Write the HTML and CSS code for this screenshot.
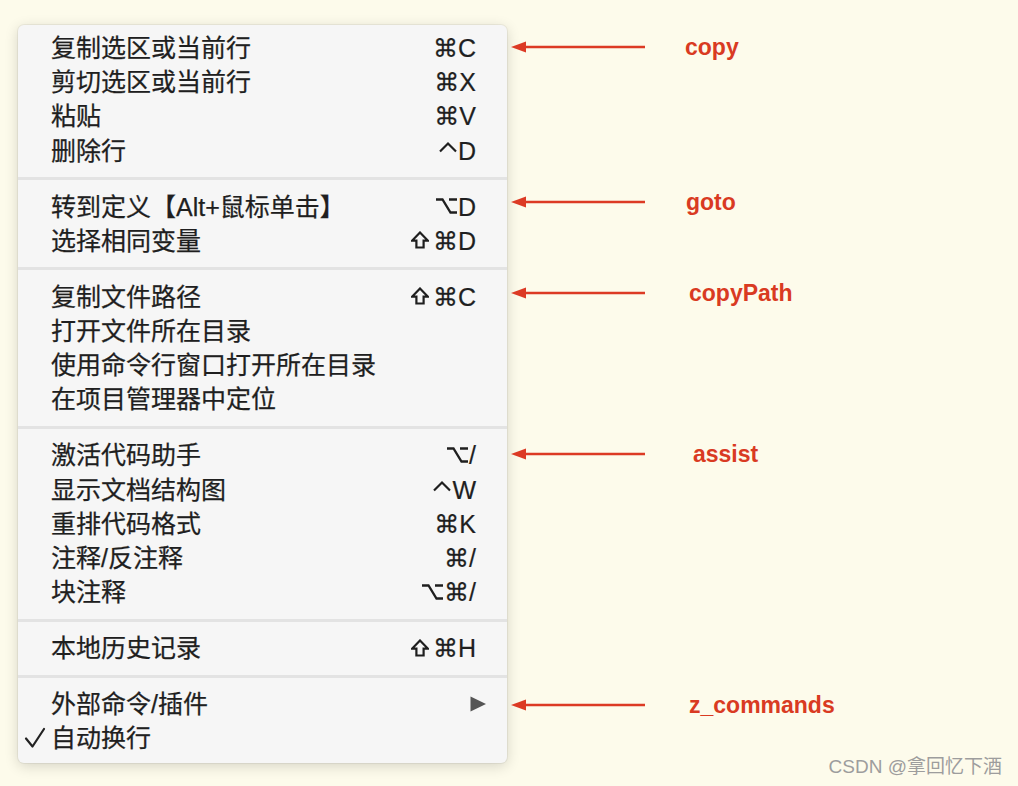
FILE: index.html
```html
<!DOCTYPE html>
<html lang="zh-CN">
<head>
<meta charset="utf-8">
<title>Menu</title>
<link rel="stylesheet" href="styles.css">
</head>
<body>
<div class="page">
  <div class="menu">
    <div class="item"><span class="check"></span><span class="label">复制选区或当前行</span><span class="key">⌘C</span></div>
    <div class="item"><span class="check"></span><span class="label">剪切选区或当前行</span><span class="key">⌘X</span></div>
    <div class="item"><span class="check"></span><span class="label">粘贴</span><span class="key">⌘V</span></div>
    <div class="item"><span class="check"></span><span class="label">删除行</span><span class="key"><svg class="k-ctrl" width="20" height="18" viewBox="0 0 20 18"><polyline points="2,10.5 10,2.5 18,10.5" fill="none" stroke="#1f1f1f" stroke-width="2.2" stroke-linejoin="miter"/></svg>D</span></div>
    <div class="sep"></div>
    <div class="item"><span class="check"></span><span class="label">转到定义【Alt+鼠标单击】</span><span class="key"><svg class="k-opt" width="23" height="18" viewBox="0 0 23 18"><path d="M1 2.5 H7.5 L15.5 15.5 H22 M14 2.5 H22" fill="none" stroke="#1f1f1f" stroke-width="2.3"/></svg>D</span></div>
    <div class="item"><span class="check"></span><span class="label">选择相同变量</span><span class="key"><svg class="k-shift" width="18" height="18" viewBox="0 0 18 18"><path d="M9 1.5 L16.8 9.6 L12.6 9.6 L12.6 16.5 L5.4 16.5 L5.4 9.6 L1.2 9.6 Z" fill="none" stroke="#1f1f1f" stroke-width="2.2" stroke-linejoin="miter"/></svg>⌘D</span></div>
    <div class="sep"></div>
    <div class="item"><span class="check"></span><span class="label">复制文件路径</span><span class="key"><svg class="k-shift" width="18" height="18" viewBox="0 0 18 18"><path d="M9 1.5 L16.8 9.6 L12.6 9.6 L12.6 16.5 L5.4 16.5 L5.4 9.6 L1.2 9.6 Z" fill="none" stroke="#1f1f1f" stroke-width="2.2" stroke-linejoin="miter"/></svg>⌘C</span></div>
    <div class="item"><span class="check"></span><span class="label">打开文件所在目录</span><span class="key"></span></div>
    <div class="item"><span class="check"></span><span class="label">使用命令行窗口打开所在目录</span><span class="key"></span></div>
    <div class="item"><span class="check"></span><span class="label">在项目管理器中定位</span><span class="key"></span></div>
    <div class="sep"></div>
    <div class="item"><span class="check"></span><span class="label">激活代码助手</span><span class="key"><svg class="k-opt" width="23" height="18" viewBox="0 0 23 18"><path d="M1 2.5 H7.5 L15.5 15.5 H22 M14 2.5 H22" fill="none" stroke="#1f1f1f" stroke-width="2.3"/></svg>/</span></div>
    <div class="item"><span class="check"></span><span class="label">显示文档结构图</span><span class="key"><svg class="k-ctrl" width="20" height="18" viewBox="0 0 20 18"><polyline points="2,10.5 10,2.5 18,10.5" fill="none" stroke="#1f1f1f" stroke-width="2.2" stroke-linejoin="miter"/></svg>W</span></div>
    <div class="item"><span class="check"></span><span class="label">重排代码格式</span><span class="key">⌘K</span></div>
    <div class="item"><span class="check"></span><span class="label">注释/反注释</span><span class="key">⌘/</span></div>
    <div class="item"><span class="check"></span><span class="label">块注释</span><span class="key"><svg class="k-opt" width="23" height="18" viewBox="0 0 23 18"><path d="M1 2.5 H7.5 L15.5 15.5 H22 M14 2.5 H22" fill="none" stroke="#1f1f1f" stroke-width="2.3"/></svg>⌘/</span></div>
    <div class="sep"></div>
    <div class="item"><span class="check"></span><span class="label">本地历史记录</span><span class="key"><svg class="k-shift" width="18" height="18" viewBox="0 0 18 18"><path d="M9 1.5 L16.8 9.6 L12.6 9.6 L12.6 16.5 L5.4 16.5 L5.4 9.6 L1.2 9.6 Z" fill="none" stroke="#1f1f1f" stroke-width="2.2" stroke-linejoin="miter"/></svg>⌘H</span></div>
    <div class="sep"></div>
    <div class="item"><span class="check"></span><span class="label">外部命令/插件</span><span class="key submenu"><svg width="16" height="16" viewBox="0 0 16 16"><polygon points="0.5,0.5 16,8 0.5,15.5" fill="#555"/></svg></span></div>
    <div class="item"><span class="check"><svg width="22" height="22" viewBox="0 0 22 22"><path d="M2 11.5 L8.5 19.5 L20 2" fill="none" stroke="#222" stroke-width="2.2" stroke-linecap="round" stroke-linejoin="round"/></svg></span><span class="label">自动换行</span><span class="key"></span></div>
  </div>

  <div class="note n-copy"><svg class="arrow" width="136" height="12" viewBox="0 0 136 12"><line x1="10" y1="6" x2="134" y2="6" stroke="#dc3a24" stroke-width="2.4"/><polygon points="0,6 15,0.5 15,11.5" fill="#dc3a24"/></svg><span class="tag">copy</span></div>
  <div class="note n-goto"><svg class="arrow" width="136" height="12" viewBox="0 0 136 12"><line x1="10" y1="6" x2="134" y2="6" stroke="#dc3a24" stroke-width="2.4"/><polygon points="0,6 15,0.5 15,11.5" fill="#dc3a24"/></svg><span class="tag">goto</span></div>
  <div class="note n-path"><svg class="arrow" width="136" height="12" viewBox="0 0 136 12"><line x1="10" y1="6" x2="134" y2="6" stroke="#dc3a24" stroke-width="2.4"/><polygon points="0,6 15,0.5 15,11.5" fill="#dc3a24"/></svg><span class="tag">copyPath</span></div>
  <div class="note n-assist"><svg class="arrow" width="136" height="12" viewBox="0 0 136 12"><line x1="10" y1="6" x2="134" y2="6" stroke="#dc3a24" stroke-width="2.4"/><polygon points="0,6 15,0.5 15,11.5" fill="#dc3a24"/></svg><span class="tag">assist</span></div>
  <div class="note n-z"><svg class="arrow" width="136" height="12" viewBox="0 0 136 12"><line x1="10" y1="6" x2="134" y2="6" stroke="#dc3a24" stroke-width="2.4"/><polygon points="0,6 15,0.5 15,11.5" fill="#dc3a24"/></svg><span class="tag">z_commands</span></div>

  <div class="watermark">CSDN @拿回忆下酒</div>
</div>
</body>
</html>
```

FILE: styles.css
```css
html, body {
  margin: 0;
  padding: 0;
}

body {
  background: #fdfbeb;
  font-family: "Liberation Sans", "Noto Sans CJK SC", sans-serif;
}

.page {
  position: relative;
  width: 1018px;
  height: 786px;
  box-sizing: border-box;
  padding: 25px 0 0 18px;
  overflow: hidden;
}

.menu {
  width: 489px;
  box-sizing: border-box;
  background: #f6f6f6;
  border-radius: 6px;
  box-shadow: 0 0 0 1px rgba(0, 0, 0, 0.05), 0 3px 14px rgba(0, 0, 0, 0.16);
  padding: 6px 0 8px;
}

.item {
  display: grid;
  grid-template-columns: 33px 1fr auto;
  align-items: center;
  height: 34.2px;
  padding-right: 31px;
  color: #1f1f1f;
  font-size: 25px;
  line-height: 34px;
}

.check {
  display: flex;
  align-items: center;
  padding-left: 6px;
  height: 34px;
}

.label {
  white-space: nowrap;
  -webkit-text-stroke: 0.25px #1f1f1f;
}

.key {
  display: flex;
  justify-content: flex-end;
  align-items: center;
  font-family: "Liberation Sans", "DejaVu Sans", sans-serif;
  font-size: 25px;
  white-space: nowrap;
  -webkit-text-stroke: 0.2px #1f1f1f;
}

.key svg {
  flex: none;
  margin-top: -1px;
}

.k-shift {
  margin-right: 4px;
}

.k-opt {
  margin-right: 0;
}

.k-ctrl {
  margin-right: 0;
}

.submenu {
  margin-right: -10px;
}

.sep {
  height: 21.8px;
  display: flex;
  align-items: center;
}

.sep::before {
  content: "";
  display: block;
  width: 100%;
  height: 3px;
  background: #e3e3e3;
}

.note {
  position: absolute;
  left: 511px;
  display: flex;
  align-items: center;
  height: 24px;
}

.arrow {
  flex: none;
}

.tag {
  margin-left: 38px;
  color: #d93a22;
  font-family: "Liberation Sans", sans-serif;
  font-weight: bold;
  font-size: 23px;
  line-height: 24px;
}

.n-copy { top: 35px; }
.n-goto { top: 190px; }
.n-path { top: 281px; }
.n-assist { top: 442px; }
.n-z { top: 693px; }

.n-goto .tag { margin-left: 39px; }
.n-path .tag { margin-left: 42px; }
.n-assist .tag { margin-left: 46px; }
.n-z .tag { margin-left: 42px; }

.watermark {
  position: absolute;
  right: 16px;
  top: 755px;
  color: #9d9d9d;
  font-size: 19px;
  line-height: 24px;
  font-family: "Liberation Sans", "Noto Sans CJK SC", sans-serif;
}
```
